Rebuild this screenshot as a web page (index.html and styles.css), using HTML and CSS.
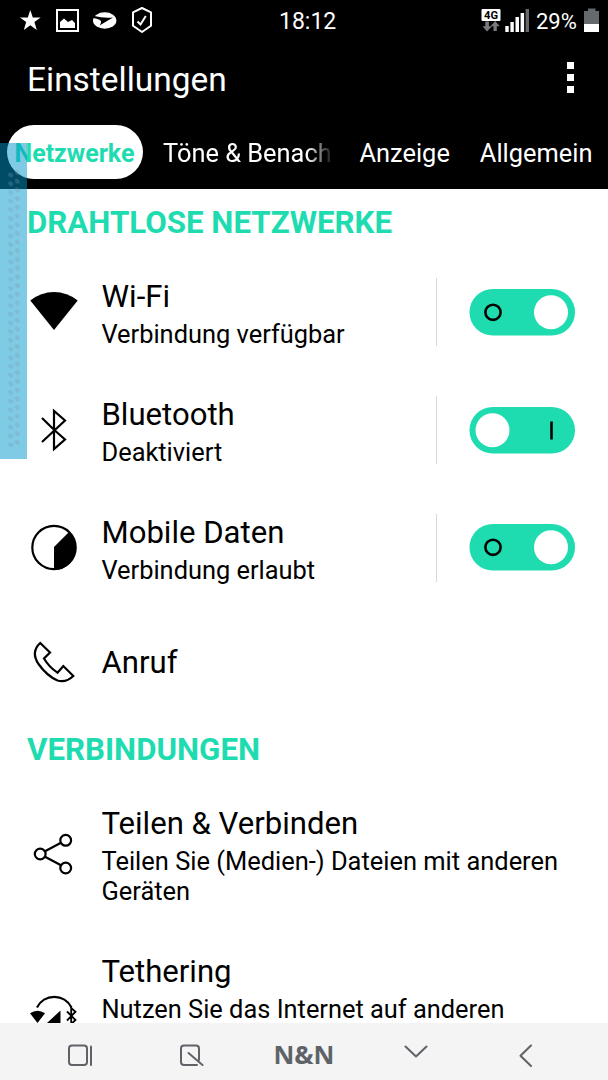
FILE: index.html
```html
<!DOCTYPE html>
<html lang="de">
<head>
<meta charset="utf-8">
<title>Einstellungen</title>
<link rel="stylesheet" href="styles.css">
</head>
<body>
<div class="phone">
  <header class="top">
    <div class="status">
      <svg class="status-icons" width="160" height="42" viewBox="0 0 160 42">
        <path fill="#fff" d="M30.300 10l2.500 7.400h7.900l-6.300 4.700 2.400 8-6.500-4.800-6.500 4.800 2.400-8-6.300-4.700h7.900z"/>
        <path fill="none" stroke="#fff" stroke-width="2" d="M57 10h21v21H57z"/>
        <path fill="#fff" d="M60 28v-6l4-3.500 4 3.500 4-2 3 3v5z"/>
        <ellipse cx="104.700" cy="20.500" rx="11.700" ry="8.300" fill="#fff"/>
        <path fill="#000" d="M93 15.800Q104 18.500 113 17.500L99.500 25.500Q102 22 100.500 20.500T93 18z"/>
        <path fill="none" stroke="#fff" stroke-width="2" stroke-linejoin="round" d="M142 8l9 4.300v13.500L142 32l-9-6.200V12.300z"/>
        <path fill="none" stroke="#fff" stroke-width="2" d="M137.500 21.500l3 3 5.300-8.500"/>
      </svg>
      <span class="clock">18:12</span>
      <div class="status-right">
        <svg width="50" height="42" viewBox="480 0 50 42">
          <rect x="481.500" y="9" width="19" height="12" rx="1" fill="#fff"/>
          <text class="net" x="484" y="19" textLength="14" lengthAdjust="spacingAndGlyphs">4G</text>
          <path fill="#77797c" d="M485.300 21.500h3.600v4.700h3L487 31.500l-4.500-5.300h2.800zM493.500 31v-4.700h-3l4.700-5.300 4.500 5.300h-2.900V31z"/>
          <path fill="#fff" d="M505.300 26h3.400v6h-3.400zM510.400 22h3.400v10h-3.400zM515.500 17h3.500v15h-3.500zM520.600 13h3.500v19h-3.500z"/>
          <path fill="#66696c" d="M525.600 9h3.400v23h-3.400z"/>
        </svg>
        <span class="percent">29%</span>
        <svg width="16" height="42" viewBox="584 0 16 42">
          <path fill="#66696c" d="M584 11h4V8.600h7.500V11h3.500v13.500h-15z"/>
          <path fill="#fff" d="M584 24h15v8h-15z"/>
        </svg>
      </div>
    </div>
    <div class="titlebar">
      <h1>Einstellungen</h1>
      <div class="more"><i></i><i></i><i></i></div>
    </div>
    <nav class="tabs">
      <span class="tab active">Netzwerke</span>
      <span class="tab cut">Töne &amp; Benach</span>
      <span class="tab">Anzeige</span>
      <span class="tab last">Allgemein</span>
    </nav>
  </header>
  <main class="list">
    <h2 class="first">DRAHTLOSE NETZWERKE</h2>
    <div class="row">
      <svg class="icon" width="54" height="60" viewBox="27 282 54 60"><path d="M30.300 300.500Q41 292 54 292t23.700 8.500L54 330z"/></svg>
      <div class="text"><b>Wi-Fi</b><p>Verbindung verfügbar</p></div>
      <div class="rule"></div>
      <svg class="switch" width="106" height="47"><rect x=".5" width="105.500" height="46.500" rx="23.250"/><circle class="ring" cx="24" cy="23.300" r="7.600"/><circle class="knob" cx="82" cy="23.300" r="17"/></svg>
    </div>
    <div class="row">
      <svg class="icon line" width="54" height="60" viewBox="27 400 54 60"><path d="M42 418l12 11.700L65 439.500 54 449v-38l11 9.500-23 21.500"/></svg>
      <div class="text"><b>Bluetooth</b><p>Deaktiviert</p></div>
      <div class="rule"></div>
      <svg class="switch" width="106" height="47"><rect x=".5" width="105.500" height="46.500" rx="23.250"/><circle class="knob" cx="23.500" cy="23.300" r="17"/><path class="ring" d="M82.500 14.500v18"/></svg>
    </div>
    <div class="row">
      <svg class="icon line" width="54" height="60" viewBox="27 518 54 60"><circle cx="54" cy="547.500" r="21.700"/><path fill="#000" stroke="none" d="M54 547l15-15a22 22 0 0 1-15 38z"/></svg>
      <div class="text"><b>Mobile Daten</b><p>Verbindung erlaubt</p></div>
      <div class="rule"></div>
      <svg class="switch raised" width="106" height="47"><rect x=".5" width="105.500" height="46.500" rx="23.250"/><circle class="ring" cx="24" cy="23.300" r="7.600"/><circle class="knob" cx="82" cy="23.300" r="17"/></svg>
    </div>
    <div class="row call">
      <svg class="icon line" width="54" height="60" viewBox="27 632 54 60"><path d="M40.200 642L50 651.500l-6 6q5 8.500 13.500 14.200L63.300 665l10 10Q66 682 57.500 679.500 47 675 38.500 663 30.500 651 40.200 642z"/></svg>
      <div class="text"><b>Anruf</b></div>
    </div>
    <h2 class="second">VERBINDUNGEN</h2>
    <div class="row tall">
      <svg class="icon line" width="54" height="60" viewBox="27 824 54 60"><circle cx="40.200" cy="854" r="5.400"/><circle cx="65.700" cy="840.300" r="5.400"/><circle cx="65.700" cy="868" r="5.400"/><path d="M45 851.300l16-8.600M45 856.700l16 8.600"/></svg>
      <div class="text"><b>Teilen &amp; Verbinden</b><p class="wide">Teilen Sie (Medien-) Dateien mit anderen<br>Geräten</p></div>
    </div>
    <div class="row tall">
      <svg class="icon line" width="54" height="60" viewBox="27 972 54 60"><path d="M37 1007.500a19.300 19.300 0 0 1 34.500 0"/><path fill="#000" stroke="none" d="M30 1013.300q7.500-5 15 0L37.500 1023zM47 1023l13.500-12.500V1023z"/><path stroke-width="1.800" d="M67 1011.500l8.500 8.500-4.300 4v-16l4.300 3.700-8.500 8.800"/></svg>
      <div class="text"><b>Tethering</b><p class="two-lines">Nutzen Sie das Internet auf anderen</p></div>
    </div>
  </main>
  <footer class="navbar">
    <svg width="608" height="57" viewBox="0 1023 608 57" fill="none" stroke="#5f6368" stroke-width="2" stroke-linecap="round" stroke-linejoin="round">
      <rect x="69" y="1045.500" width="18" height="19.500" rx="3"/><path d="M91 1046.500v18.500"/>
      <path d="M199 1060v-11.500q0-3-3-3h-12q-3 0-3 3v13.500q0 3 3 3h13M188.500 1053l14 12"/>
      <path d="M405.500 1046.500l10.500 10 10.500-10M531 1045.500l-10.500 10.200L531 1066"/>
      <text class="brand" x="273.500" y="1064" textLength="61" lengthAdjust="spacingAndGlyphs">N&amp;N</text>
    </svg>
  </footer>
  <svg class="edge" width="27" height="316">
    <defs><pattern id="grip" width="27" height="8.700" patternUnits="userSpaceOnUse" y="26">
      <ellipse cx="10.700" cy="6" rx="2.700" ry="2.100" transform="rotate(35 10.700 6)"/><ellipse cx="17.300" cy="3.500" rx="2.700" ry="2.100" transform="rotate(35 17.300 3.500)"/>
    </pattern></defs>
    <rect width="27" height="316" fill="#0096cb" fill-opacity=".5"/>
    <rect y="26" width="27" height="278" fill="url(#grip)"/>
  </svg>
</div>
</body>
</html>
```
FILE: styles.css
```css
* { box-sizing: border-box; }
body { margin: 0; background: #fff; font-family: Roboto, sans-serif; color: #000; }
h1, h2, p { margin: 0; }
.phone { position: relative; width: 608px; height: 1080px; overflow: hidden; display: flex; flex-direction: column; }
.top { height: 189px; background: #000; color: #fff; flex: none; }
.status { height: 42px; display: flex; align-items: center; line-height: 44px; }
.status-icons { margin-right: 119px; }
.clock { font-size: 23px; width: 201px; padding-top: 2px; }
.status-right { display: flex; height: 42px; }
.percent { font-size: 22px; width: 48px; margin-left: 6px; }
.net { font: bold 11.500px Roboto, sans-serif; fill: #000; }
.titlebar { height: 75px; padding: 0 34px 0 27px; display: flex; justify-content: space-between; align-items: center; }
h1 { font-size: 33.450px; font-weight: 400; line-height: 72px; }
.more { display: grid; gap: 5px; margin-bottom: 4px; }
.more i { width: 7px; height: 7px; background: #fff; }
.tabs { height: 72px; padding: 8px 0 10px 7px; display: flex; }
.tab { font-size: 25.400px; line-height: 57px; white-space: nowrap; margin-right: 30px; }
.active { width: 136px; height: 54px; border-radius: 27px; background: #fff; color: #1edcb0; font-weight: 700; font-size: 25px; text-align: center; margin-right: 20px; padding-right: 1px; }
.cut { width: 166.500px; -webkit-mask-image: linear-gradient(to right, #000 86%, #0002); mask-image: linear-gradient(to right, #000 86%, #0002); }
.last { margin-right: 0; }
.list { height: 834px; overflow: hidden; flex: none; }
h2 { color: #1edcb0; font-size: 31.250px; font-weight: 700; padding-left: 27px; white-space: nowrap; }
.first { height: 64px; line-height: 68px; }
.second { height: 62px; line-height: 64px; }
.row { height: 118px; padding: 0 33px 0 27px; display: flex; align-items: center; }
.call { height: 111px; }
.tall { height: 148px; }
.icon { flex: none; margin-right: 20.500px; }
.line { fill: none; stroke: #000; stroke-width: 2.200; }
.text { flex: 1; white-space: nowrap; padding-top: 4px; }
.text b { display: block; font-size: 31.100px; font-weight: 400; line-height: 38px; padding-bottom: 4px; }
.text p { font-size: 25.400px; line-height: 30px; margin: -1px 0 1px; }
.text .wide { font-size: 25.450px; }
.text .two-lines { min-height: 60px; }
.rule { width: 1px; height: 68px; background: #d8d8d8; margin-right: 32px; }
.switch { flex: none; fill: #1edcb0; }
.raised { margin-bottom: 1px; }
.knob { fill: #fff; }
.ring { fill: none; stroke: #000; stroke-width: 2.600; }
.navbar { height: 57px; background: #f4f4f4; flex: none; }
.navbar svg { display: block; }
.brand { font: 700 25px "Open Sans", sans-serif; fill: #5f6368; stroke: none; }
.edge { position: absolute; left: 0; top: 143px; }
.edge pattern { fill: #789ca8; fill-opacity: .3; }
```
